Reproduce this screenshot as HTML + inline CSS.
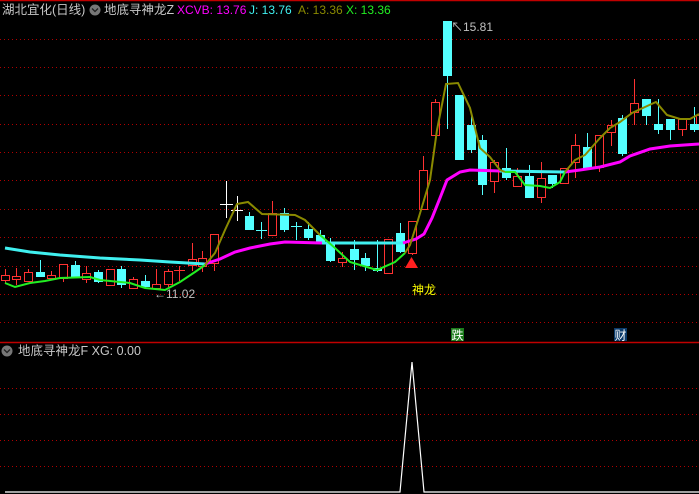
<!DOCTYPE html>
<html><head><meta charset="utf-8"><style>
html,body{margin:0;padding:0;background:#000;width:699px;height:494px;overflow:hidden}
svg{display:block}
text{font-family:"Liberation Sans","Noto Sans CJK SC",sans-serif}
</style></head><body>
<svg width="699" height="494" viewBox="0 0 699 494" xmlns="http://www.w3.org/2000/svg">
<rect width="699" height="494" fill="#000"/>
<line x1="0" y1="0.5" x2="699" y2="0.5" stroke="#c00000" stroke-width="1.5"/>
<g stroke="#b00000" stroke-width="1" stroke-dasharray="1,3">
<line x1="0" y1="39.5" x2="699" y2="39.5"/>
<line x1="0" y1="67.5" x2="699" y2="67.5"/>
<line x1="0" y1="95.5" x2="699" y2="95.5"/>
<line x1="0" y1="124.5" x2="699" y2="124.5"/>
<line x1="0" y1="152.5" x2="699" y2="152.5"/>
<line x1="0" y1="180.5" x2="699" y2="180.5"/>
<line x1="0" y1="209.5" x2="699" y2="209.5"/>
<line x1="0" y1="237.5" x2="699" y2="237.5"/>
<line x1="0" y1="266.5" x2="699" y2="266.5"/>
<line x1="0" y1="294.5" x2="699" y2="294.5"/>
<line x1="0" y1="322.5" x2="699" y2="322.5"/>
<line x1="0" y1="388.5" x2="699" y2="388.5"/>
<line x1="0" y1="414.5" x2="699" y2="414.5"/>
<line x1="0" y1="440.5" x2="699" y2="440.5"/>
<line x1="0" y1="466.5" x2="699" y2="466.5"/>
</g>
<line x1="0" y1="342.5" x2="699" y2="342.5" stroke="#c00000" stroke-width="1.5"/>

<!-- wicks -->
<g stroke-width="1">
<g stroke="#ff3232">
<line x1="5.5" y1="269" x2="5.5" y2="283"/><line x1="16.5" y1="268" x2="16.5" y2="285"/><line x1="28.5" y1="269" x2="28.5" y2="282"/>
<line x1="51.5" y1="271" x2="51.5" y2="279"/><line x1="63.5" y1="264" x2="63.5" y2="282"/><line x1="86.5" y1="266" x2="86.5" y2="283"/>
<line x1="110.5" y1="269" x2="110.5" y2="286"/><line x1="133.5" y1="277" x2="133.5" y2="289"/><line x1="156.5" y1="269" x2="156.5" y2="289"/>
<line x1="168.5" y1="269" x2="168.5" y2="287"/><line x1="179.5" y1="266" x2="179.5" y2="281"/><line x1="174" y1="270.5" x2="185" y2="270.5"/>
<line x1="192.5" y1="243" x2="192.5" y2="271"/><line x1="202.5" y1="251" x2="202.5" y2="272"/><line x1="214.5" y1="234" x2="214.5" y2="271"/>
<line x1="272.5" y1="201" x2="272.5" y2="235"/><line x1="342.5" y1="252" x2="342.5" y2="267"/><line x1="388.5" y1="239" x2="388.5" y2="273"/>
<line x1="412.5" y1="221" x2="412.5" y2="255"/><line x1="423.5" y1="156" x2="423.5" y2="210"/><line x1="435.5" y1="99" x2="435.5" y2="135"/>
<line x1="494.5" y1="160" x2="494.5" y2="193"/><line x1="517.5" y1="168" x2="517.5" y2="186"/><line x1="541.5" y1="162" x2="541.5" y2="203"/>
<line x1="564.5" y1="168" x2="564.5" y2="184"/><line x1="575.5" y1="134" x2="575.5" y2="178"/><line x1="599.5" y1="135" x2="599.5" y2="172"/>
<line x1="611.5" y1="120" x2="611.5" y2="146"/><line x1="634.5" y1="79" x2="634.5" y2="125"/><line x1="682.5" y1="119" x2="682.5" y2="136"/>
</g>
<g stroke="#54ffff">
<line x1="40.5" y1="260" x2="40.5" y2="277"/><line x1="75.5" y1="261" x2="75.5" y2="278"/><line x1="98.5" y1="270" x2="98.5" y2="283"/>
<line x1="121.5" y1="266" x2="121.5" y2="288"/><line x1="145.5" y1="275" x2="145.5" y2="288"/><line x1="249.5" y1="212" x2="249.5" y2="230"/>
<line x1="261.5" y1="222" x2="261.5" y2="239"/><line x1="256" y1="230.5" x2="267" y2="230.5"/><line x1="284.5" y1="208" x2="284.5" y2="232"/>
<line x1="296.5" y1="222" x2="296.5" y2="240"/><line x1="291" y1="226.5" x2="302" y2="226.5"/><line x1="308.5" y1="222" x2="308.5" y2="240"/>
<line x1="320.5" y1="230" x2="320.5" y2="243"/><line x1="330.5" y1="238" x2="330.5" y2="262"/><line x1="354.5" y1="240" x2="354.5" y2="270"/>
<line x1="365.5" y1="253" x2="365.5" y2="271"/><line x1="377.5" y1="240" x2="377.5" y2="272"/><line x1="400.5" y1="223" x2="400.5" y2="253"/>
<line x1="447.5" y1="21" x2="447.5" y2="129"/><line x1="471.5" y1="115" x2="471.5" y2="153"/><line x1="482.5" y1="135" x2="482.5" y2="195"/>
<line x1="506.5" y1="148" x2="506.5" y2="180"/><line x1="529.5" y1="165" x2="529.5" y2="198"/><line x1="552.5" y1="175" x2="552.5" y2="188"/>
<line x1="587.5" y1="133" x2="587.5" y2="167"/><line x1="622.5" y1="115" x2="622.5" y2="156"/><line x1="646.5" y1="99" x2="646.5" y2="125"/>
<line x1="658.5" y1="99" x2="658.5" y2="134"/><line x1="670.5" y1="119" x2="670.5" y2="140"/><line x1="694.5" y1="107" x2="694.5" y2="132"/>
</g>
<g stroke="#ffffff">
<line x1="226.5" y1="181" x2="226.5" y2="218"/><line x1="220" y1="204.5" x2="233" y2="204.5"/>
<line x1="237.5" y1="196" x2="237.5" y2="221"/><line x1="231" y1="210.5" x2="243" y2="210.5"/>
</g>
</g>
<!-- red hollow bodies -->
<g fill="#000" stroke="#ff3232" stroke-width="1">
<rect x="1.5" y="275.5" width="8" height="5"/><rect x="12.5" y="276.5" width="8" height="3"/><rect x="24.5" y="272.5" width="8" height="9"/>
<rect x="47.5" y="275.5" width="8" height="3"/><rect x="59.5" y="264.5" width="8" height="14"/><rect x="82.5" y="273.5" width="8" height="6"/>
<rect x="106.5" y="269.5" width="8" height="16"/><rect x="129.5" y="279.5" width="8" height="9"/><rect x="152.5" y="284.5" width="8" height="4"/>
<rect x="164.5" y="271.5" width="8" height="13"/><rect x="188.5" y="259.5" width="8" height="6"/><rect x="198.5" y="258.5" width="8" height="8"/>
<rect x="210.5" y="234.5" width="8" height="29"/><rect x="268.5" y="213.5" width="8" height="22"/><rect x="338.5" y="258.5" width="8" height="4"/>
<rect x="384.5" y="239.5" width="8" height="34"/><rect x="408.5" y="221.5" width="8" height="32"/><rect x="419.5" y="170.5" width="8" height="39"/>
<rect x="431.5" y="102.5" width="8" height="33"/><rect x="490.5" y="162.5" width="8" height="19"/><rect x="513.5" y="176.5" width="8" height="10"/>
<rect x="537.5" y="178.5" width="8" height="19"/><rect x="560.5" y="168.5" width="8" height="15"/><rect x="571.5" y="145.5" width="8" height="17"/>
<rect x="595.5" y="135.5" width="8" height="32"/><rect x="607.5" y="125.5" width="8" height="7"/><rect x="630.5" y="103.5" width="8" height="9"/>
<rect x="678.5" y="119.5" width="8" height="10"/><rect x="696.5" y="115.5" width="8" height="14"/>
</g>
<!-- cyan filled bodies -->
<g fill="#54ffff">
<rect x="36" y="272" width="9" height="5"/><rect x="71" y="265" width="9" height="12"/><rect x="94" y="272" width="9" height="10"/>
<rect x="117" y="269" width="9" height="16"/><rect x="141" y="281" width="9" height="6"/><rect x="245" y="216" width="9" height="14"/>
<rect x="280" y="213" width="9" height="17"/><rect x="304" y="229" width="9" height="9"/><rect x="316" y="235" width="9" height="8"/>
<rect x="326" y="243" width="9" height="18"/><rect x="350" y="249" width="9" height="11"/><rect x="361" y="258" width="9" height="8"/>
<rect x="373" y="268" width="9" height="3"/><rect x="396" y="233" width="9" height="19"/><rect x="443" y="21" width="9" height="55"/>
<rect x="455" y="95" width="9" height="65"/><rect x="467" y="125" width="9" height="25"/><rect x="478" y="140" width="9" height="45"/>
<rect x="502" y="168" width="9" height="10"/><rect x="525" y="176" width="9" height="22"/><rect x="548" y="175" width="9" height="9"/>
<rect x="583" y="147" width="9" height="21"/><rect x="618" y="118" width="9" height="36"/><rect x="642" y="99" width="9" height="17"/>
<rect x="654" y="124" width="9" height="6"/><rect x="666" y="119" width="9" height="11"/><rect x="690" y="124" width="9" height="6"/>
</g>

<!-- thick J/XCVB line -->
<polyline fill="none" stroke="#40f0f0" stroke-width="3" points="5,248 30,252 60,255 100,258 140,260 170,262 205,264"/>
<polyline fill="none" stroke="#ff00ff" stroke-width="3" points="205,264 220,259 235,252 250,248 270,244 285,242 322,243"/>
<polyline fill="none" stroke="#40f0f0" stroke-width="3" points="322,243 403,243"/>
<polyline fill="none" stroke="#ff00ff" stroke-width="3" points="403,243 416,239 424,234 432,218 440,198 447,180 460,172 470,170 500,171"/>
<polyline fill="none" stroke="#40f0f0" stroke-width="3" points="500,171 565,172"/>
<polyline fill="none" stroke="#ff00ff" stroke-width="3" points="565,172 580,170 600,167 620,162 630,156 650,149 670,146 699,144"/>

<!-- A / X line -->
<polyline fill="none" stroke="#22ee22" stroke-width="2" points="5,283 15,287 30,283 45,281 60,278 90,277 100,280 130,283 145,288 165,290 180,282 195,272 205,265"/>
<polyline fill="none" stroke="#8a8a00" stroke-width="2" points="205,265 215,253 225,230 237,204 248,202 262,214 295,215 305,220 320,235"/>
<polyline fill="none" stroke="#22ee22" stroke-width="2" points="320,235 335,248 350,262 377,270 395,262 405,253"/>
<polyline fill="none" stroke="#8a8a00" stroke-width="2" points="405,253 410,245 418,220 430,180 437,130 446,84 458,83 470,108 480,148 490,157 500,170 505,172"/>
<polyline fill="none" stroke="#22ee22" stroke-width="2" points="505,172 515,172 525,185 540,186 550,188 560,182 565,172"/>
<polyline fill="none" stroke="#8a8a00" stroke-width="2" points="565,172 575,160 585,155 600,138 610,128 620,122 632,113 645,107 656,102 667,115 680,119 690,119 699,114"/>

<!-- markers -->
<polygon points="405,268 418,268 411.5,257" fill="#ff2020"/>
<text x="412" y="294" font-size="12" fill="#ffff00">神龙</text>
<text x="154" y="298" font-size="12" fill="#c0c0c0">←11.02</text>
<text x="451" y="31" font-size="12" fill="#c0c0c0">↖15.81</text>
<rect x="451" y="328" width="13" height="13" fill="#1a7a1a"/>
<text x="451.5" y="339.5" font-size="12" fill="#fff">跌</text>
<rect x="614" y="328" width="13" height="13" fill="#0a3a6a"/>
<text x="614.5" y="339.5" font-size="12" fill="#fff">财</text>

<!-- header -->
<text x="2" y="14" font-size="12.5" fill="#c8c8c8">湖北宜化(日线)</text>
<circle cx="95" cy="10" r="5.5" fill="#777"/><path d="M92,8.5 L95,11.5 L98,8.5" stroke="#222" stroke-width="1.3" fill="none"/>
<text x="104" y="14" font-size="12.5" fill="#c8c8c8">地底寻神龙Z</text>
<text x="177" y="14" font-size="12" fill="#ff00ff">XCVB: 13.76</text>
<text x="249" y="14" font-size="12" fill="#40f0f0">J: 13.76</text>
<text x="298" y="14" font-size="12" fill="#8a8a00">A: 13.36</text>
<text x="346" y="14" font-size="12" fill="#22ee22">X: 13.36</text>

<!-- lower panel -->
<circle cx="7" cy="351" r="5.5" fill="#777"/><path d="M4,349.5 L7,352.5 L10,349.5" stroke="#222" stroke-width="1.3" fill="none"/>
<text x="18" y="355" font-size="12.5" fill="#c8c8c8">地底寻神龙F  XG: 0.00</text>
<polyline fill="none" stroke="#fff" stroke-width="1.2" points="5,492 400,492 412,362 424,492 699,492"/>
</svg>
</body></html>
